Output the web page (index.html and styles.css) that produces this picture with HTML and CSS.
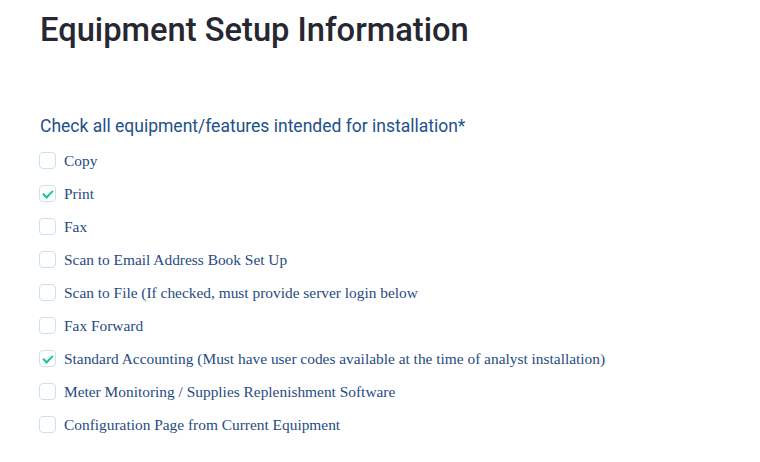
FILE: index.html
```html
<!DOCTYPE html>
<html lang="en">
<head>
    <meta charset="UTF-8">
    <title>Equipment Setup Information</title>
    <link rel="stylesheet" href="styles.css">
</head>
<body>

    <h1 class="page-title">Equipment Setup Information</h1>

    <div class="equipment">
        <p class="question">Check all equipment/features intended for installation*</p>

        <label class="option"><input type="checkbox" name="equip" value="copy"><span class="box"></span>Copy</label>
        <label class="option"><input type="checkbox" name="equip" value="print" checked><span class="box"></span>Print</label>
        <label class="option"><input type="checkbox" name="equip" value="fax"><span class="box"></span>Fax</label>
        <label class="option"><input type="checkbox" name="equip" value="scan-email"><span class="box"></span>Scan to Email Address Book Set Up</label>
        <label class="option"><input type="checkbox" name="equip" value="scan-file"><span class="box"></span>Scan to File (If checked, must provide server login below</label>
        <label class="option"><input type="checkbox" name="equip" value="fax-forward"><span class="box"></span>Fax Forward</label>
        <label class="option"><input type="checkbox" name="equip" value="accounting" checked><span class="box"></span>Standard Accounting (Must have user codes available at the time of analyst installation)</label>
        <label class="option"><input type="checkbox" name="equip" value="meter"><span class="box"></span>Meter Monitoring / Supplies Replenishment Software</label>
        <label class="option"><input type="checkbox" name="equip" value="config"><span class="box"></span>Configuration Page from Current Equipment</label>
    </div>

</body>
</html>
```

FILE: styles.css
```css
body {
    margin: 0;
    padding: 0 40px;
    background-color: #ffffff;
}

.page-title {
    font-family: 'Roboto', sans-serif;
    font-weight: 500;
    font-size: 32.7px;
    line-height: 40px;
    color: #262733;
    margin: 10px 0 0 0;
}

.question {
    font-family: 'Roboto', sans-serif;
    font-size: 17.5px;
    color: #21508a;
    margin: 65px 0 7px 0;
    line-height: 22px;
}

.option {
    display: flex;
    align-items: center;
    height: 33px;
    font-family: 'Liberation Serif', serif;
    font-size: 15.4px;
    color: #1f4b82;
    cursor: pointer;
}

.option input {
    display: none;
}

/* custom checkbox */
.box {
    width: 15px;
    height: 15px;
    border: 1px solid #c9e2f3;
    border-radius: 4px;
    margin: 0 8px 0 -1px;
    position: relative;
    flex-shrink: 0;
}

.option input:checked + .box::after {
    content: "";
    position: absolute;
    left: 5px;
    top: 2px;
    width: 4px;
    height: 8px;
    border: solid #1ec48a;
    border-width: 0 2px 2px 0;
    transform: rotate(45deg);
}
```
